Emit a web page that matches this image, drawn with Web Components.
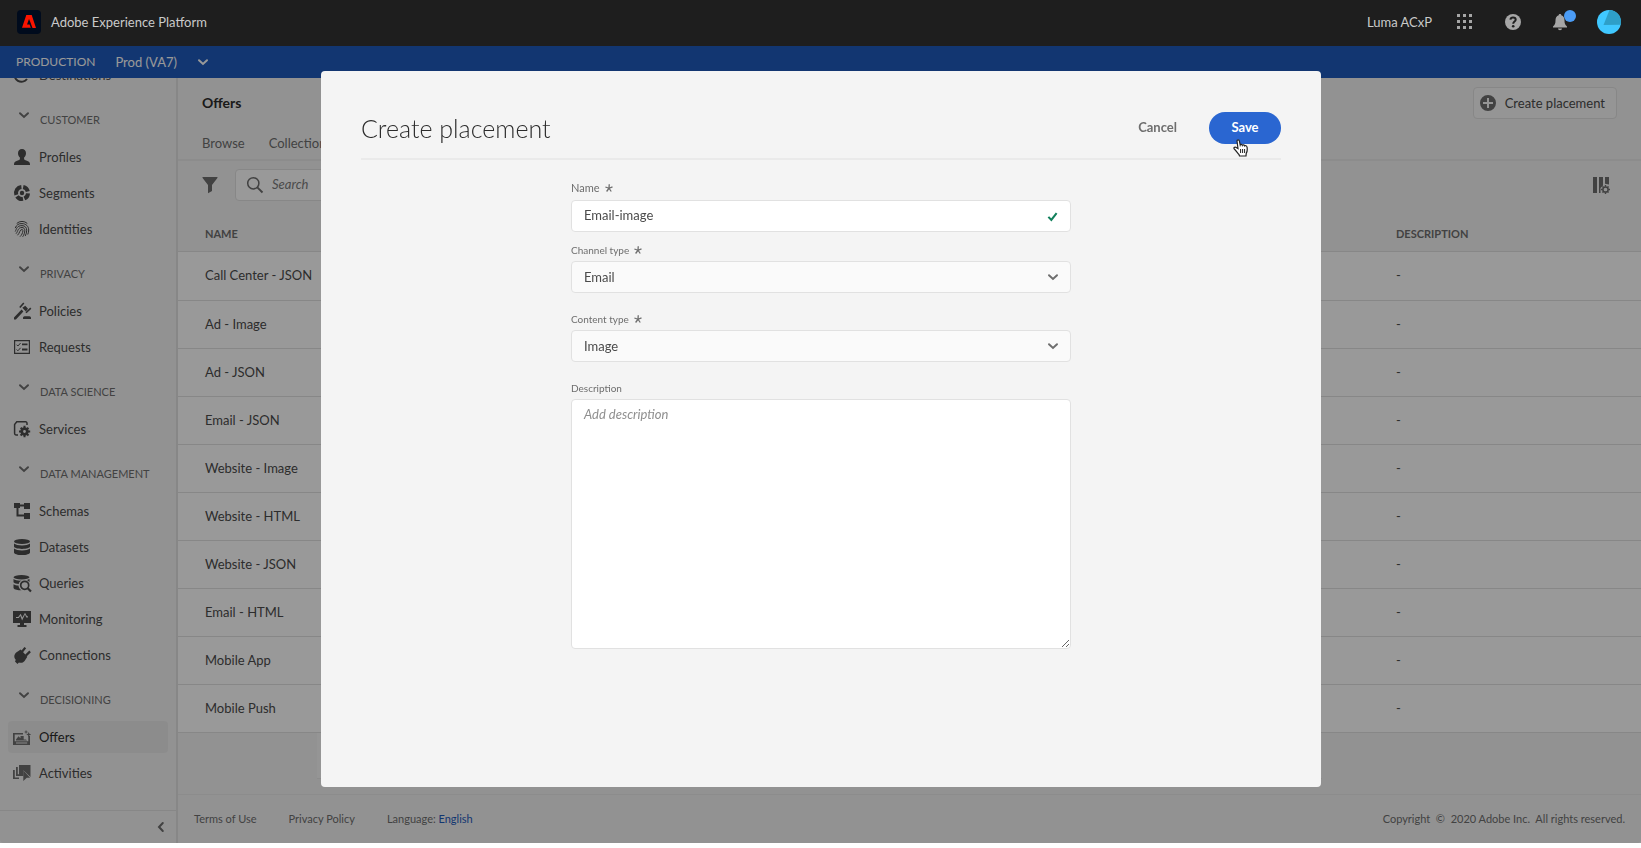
<!DOCTYPE html>
<html lang="en">
<head>
<meta charset="utf-8">
<meta name="viewport" content="width=device-width, initial-scale=1">
<title>Offers - Adobe Experience Platform</title>
<style>
  body { margin: 0; background: #fff; color: #4b4b4b; font: 13px/20px Lato, "Noto Sans", sans-serif; }
</style>
</head>
<body>
<aep-app>
  <aep-header slot="header" heading="Adobe Experience Platform" org="Luma ACxP"></aep-header>
  <aep-sandbox slot="sandbox" kind="PRODUCTION" name="Prod (VA7)"></aep-sandbox>
  <aep-nav slot="nav">
    <aep-nav-item icon="destinations">Destinations</aep-nav-item>
    <aep-nav-section heading="CUSTOMER">
      <aep-nav-item icon="profiles">Profiles</aep-nav-item>
      <aep-nav-item icon="segments">Segments</aep-nav-item>
      <aep-nav-item icon="identities">Identities</aep-nav-item>
    </aep-nav-section>
    <aep-nav-section heading="PRIVACY">
      <aep-nav-item icon="policies">Policies</aep-nav-item>
      <aep-nav-item icon="requests">Requests</aep-nav-item>
    </aep-nav-section>
    <aep-nav-section heading="DATA SCIENCE">
      <aep-nav-item icon="services">Services</aep-nav-item>
    </aep-nav-section>
    <aep-nav-section heading="DATA MANAGEMENT">
      <aep-nav-item icon="schemas">Schemas</aep-nav-item>
      <aep-nav-item icon="datasets">Datasets</aep-nav-item>
      <aep-nav-item icon="queries">Queries</aep-nav-item>
      <aep-nav-item icon="monitoring">Monitoring</aep-nav-item>
      <aep-nav-item icon="connections">Connections</aep-nav-item>
    </aep-nav-section>
    <aep-nav-section heading="DECISIONING">
      <aep-nav-item icon="offers" current>Offers</aep-nav-item>
      <aep-nav-item icon="activities">Activities</aep-nav-item>
    </aep-nav-section>
  </aep-nav>
  <aep-offers slot="main"></aep-offers>
  <aep-footer slot="footer"></aep-footer>
  <aep-dialog slot="dialog" heading="Create placement">
    <aep-field label="Name" kind="text" value="Email-image" required></aep-field>
    <aep-field label="Channel type" kind="select" value="Email" required></aep-field>
    <aep-field label="Content type" kind="select" value="Image" required></aep-field>
    <aep-field label="Description" kind="area" placeholder="Add description"></aep-field>
  </aep-dialog>
</aep-app>

<script>
const ICONS = {
  destinations: '<path d="M1 5a7 7 0 0 0 12 7" fill="none" stroke="currentColor" stroke-width="2"/><path d="M5 6h8v2H5z"/>',
  profiles: '<path d="M8 0c2.500 0 4 1.800 4 4.200 0 1.700-.8 3.300-1.900 4.200v1.700c0 .5.3.8.8 1 2.800.8 5.100 1.800 5.100 3.900v1H0v-1c0-2.100 2.300-3.100 5.100-3.900.5-.2.8-.5.8-1V8.400C4.800 7.500 4 5.900 4 4.200 4 1.800 5.500 0 8 0z"/>',
  segments: '<g fill="none" stroke="currentColor" stroke-width="4"><path d="M9.200 2a6 6 0 0 1 4.600 4.400"/><path d="M14 8.400a6 6 0 0 1-3.600 5.100"/><path d="M9 13.900A6 6 0 0 1 3 11.300"/><path d="M2.300 9.800A6 6 0 0 1 7.400 2"/></g><circle cx="8" cy="8" r="2.200"/>',
  identities: '<g fill="none" stroke="currentColor" stroke-width="1" stroke-linecap="round"><path d="M3 2.200a7.400 7.400 0 0 1 10 0"/><path d="M1.300 6.800A6.600 6.600 0 0 1 8 2.600c4 0 6.700 2.800 6.700 6.400 0 1.600-.3 3-.8 4.200"/><path d="M1.400 10.200C2.600 8 2.600 4.700 8 4.600c3 0 4.700 2 4.700 4.600 0 2-.5 4-1.300 5.500"/><path d="M2.300 12.400C4.300 10 3.600 6.600 8 6.500c1.700 0 2.800 1.200 2.800 2.800 0 2.400-.8 4.600-1.900 6.200"/><path d="M3.800 14C6 11.800 5.700 8.500 8 8.500c.8 0 1 .7.900 1.500-.3 2.200-1.300 4.200-2.600 5.400"/></g>',
  policies: '<path d="M0 14.600l7.600-8 1.800 1.800-7.500 8H0zM9 15c0-1 .7-1.700 1.600-1.700h4.800c.9 0 1.600.7 1.600 1.700v1H9z"/><path d="M8.300 4.800l3-2 2.700 3-2.100 2.700z"/><path d="M5.800 4.500l4-4.500M12 9.800l4.800-4.700" fill="none" stroke="currentColor" stroke-width="1.600"/>',
  requests: '<path d="M.600 1.600h14.800v12.800H.6z" fill="none" stroke="currentColor" stroke-width="1.200"/><path d="M2.600 5.700l1.300 1.300L6.600 4M2.600 10.500l1.300 1.300 2.700-3" fill="none" stroke="currentColor"/><path d="M8 4.600h5.500v1.600H8zM8 9.600h5.500v1.800H8z"/>',
  services: '<path d="M4 14H2a1.400 1.400 0 0 1-1.400-1.400V3.400L2.800.8h8.900A1.300 1.300 0 0 1 13 2.100V4" fill="none" stroke="currentColor" stroke-width="1.500"/><circle cx="10.500" cy="10.500" r="2.800" fill="none" stroke="currentColor" stroke-width="2.800"/><g stroke="currentColor" stroke-width="2"><path d="M10.500 7V4.800M10.500 16.200V14M5 10.500h2M14 10.500h2.200M6.700 6.700l1.500 1.500M12.900 12.900l1.600 1.600M14.400 6.700l-1.500 1.500M8.200 12.900l-1.600 1.600"/></g>',
  schemas: '<path d="M0 0h6v5H0zM10 0h6v6h-6zM10 10h6v6h-6z"/><path d="M4 2.600h8M3.500 4v8.600H11" fill="none" stroke="currentColor" stroke-width="2"/>',
  datasets: '<ellipse cx="8" cy="2.500" rx="8" ry="2.500"/><path d="M0 4.400c1.500 1.300 4.500 2 8 2s6.500-.7 8-2v3.100c0 1.400-3.600 2.400-8 2.400S0 8.900 0 7.500z"/><path d="M0 9.500c1.500 1.300 4.500 2 8 2s6.500-.7 8-2v3.900c0 1.400-3.600 2.600-8 2.600s-8-1.200-8-2.600z"/>',
  queries: '<ellipse cx="7.500" cy="2.200" rx="8" ry="2.200"/><path d="M-.500 4c2 1.400 5 1.800 8 1.600-1.600.7-2.500 2-2.800 3.300C2.500 8.800.500 8.300-.500 7.300zM-.500 9.200c1.300.8 3 1.200 5 1.300.1 1.900 1.300 3.900 3 4.700-4 .3-8-.8-8-2.400zM13 5l2.500-1v3z"/><circle cx="10.700" cy="10.300" r="4" fill="none" stroke="currentColor" stroke-width="1.700"/><path d="M13.500 13l3.500 3.500" stroke="currentColor" stroke-width="2.200"/>',
  monitoring: '<path d="M-1 0h18v12h-7v2h2.500v2h-9v-2H6v-2h-7zM2 7h2.800l1.500-2.300 1.800 4.700L11 3.500l1.300 3H14V5.300h-1L11 1.700 8.300 6.500 6.700 2.800 4.200 6H2z" fill-rule="evenodd"/>',
  connections: '<path d="M2.200 5.500l4.500-3 6.600 7.200-2.700 4.300c-1.700 2-4 2.200-5.700 1.400L3.500 17 1 14.400l.8-1.600C-.400 10.500 0 7.500 2.200 5.500z"/><path d="M8 4.700L11.300.6M11.800 8.600l4.300-4.200" stroke="currentColor" stroke-width="2.200"/>',
  offers: '<path d="M-1 4h10v1.500H.700v6.800h13.600V7H16v9H-1zM2 13.500v.9h11.200v-.9z" fill-rule="evenodd"/><path d="M2 10.500l2.500-3.300 2 2.100V7h3.200v3.500H12l1 1H2z"/><path d="M10 3l1.500-.6L12 .800l.6 1.600 1.600.6-1.600.6-.6 1.600-.5-1.600zM12.200 5.500l1.800-.7.700-1.900.7 1.900 1.800.7-1.800.7-.7 1.900-.7-1.900z"/>',
  activities: '<path d="M-1 5h1.800v7.500H5V14h-6zM2 2h1.800v7.300H7v1.600H2zM5 0h11.500v12L9.400 5.200v5.900H5z"/><path d="M9.300 5.200l6.800 7.600h-3.300L9.300 16z"/>',
  chevron: '<path d="M4 6.300L8 10l4-3.700" fill="none" stroke="currentColor" stroke-width="2" stroke-linecap="round"/>',
  back: '<path d="M9.800 4L6 8l3.800 4" fill="none" stroke="currentColor" stroke-width="2" stroke-linecap="round"/>',
  apps: '<path d="M0 0h3v3H0zM6 0h3v3H6zM12 0h3v3h-3zM0 6h3v3H0zM6 6h3v3H6zM12 6h3v3h-3zM0 12h3v3H0zM6 12h3v3H6zM12 12h3v3h-3z"/>',
  help: '<circle cx="8" cy="8" r="8"/><path d="M5.400 5.700C5.600 4.200 6.700 3.500 8 3.500c1.600 0 2.700.9 2.700 2.200 0 1.900-2.500 1.900-2.500 4" fill="none" stroke="#1e1e1e" stroke-width="2"/><circle cx="8.200" cy="12.200" r="1.300" fill="#1e1e1e"/>',
  bell: '<path d="M7 0c.8 0 1.300.5 1.300 1.200C10.700 1.800 11.500 4 11.500 6.300c0 3.400.6 4.500 2.500 6.200v.9H0v-.9c1.900-1.700 2.500-2.800 2.500-6.200C2.500 4 3.300 1.800 5.700 1.200 5.700.5 6.200 0 7 0zM5 14.600h4c0 1-.9 1.700-2 1.700s-2-.7-2-1.700z"/>',
  plus: '<path fill-rule="evenodd" d="M8 0a8 8 0 1 0 0 16A8 8 0 0 0 8 0zM7 3h2v4h4v2H9v4H7V9H3V7h4z"/>',
  filter: '<path d="M1 0h14c.5 0 .7.500.4.900L10 8v6l-4 2.300V8L.600.900C.300.500.500 0 1 0z"/>',
  search: '<circle cx="6.300" cy="6.300" r="5.600" fill="none" stroke="currentColor" stroke-width="1.500"/><path d="M10.300 10.300l5.200 5.200" stroke="currentColor" stroke-width="1.900"/>',
  columns: '<path d="M0 0h4v16H0zM6 0h4v8.500L7.500 11v5H6zM12 0h4v7.500l-4-.8z"/><circle cx="12.500" cy="12.500" r="2.600" fill="none" stroke="currentColor" stroke-width="1.500"/><path d="M12.500 9.800V8M12.500 17v-1.800M8 12.500h1.800M15.200 12.500H17M9.400 9.400l1.200 1.200M14.400 14.400l1.200 1.200M15.600 9.400l-1.200 1.200M10.600 14.400l-1.200 1.200" stroke="currentColor" stroke-width="1.400"/>',
  star: '<path d="M8.500 0.500L8 8.500l7-2.800M8 8.500l4.500 6.500M8 8.500L3.200 15M8 8.500L.800 6" fill="none" stroke="currentColor" stroke-width="2.600"/>',
  check: '<path d="M2 8.500L6.300 13 14 3" fill="none" stroke="currentColor" stroke-width="3"/>'
};

/* Base class: stamps the template returned by render() into an open shadow root. */
class AepElement extends HTMLElement {
  connectedCallback() {
    if (this.shadowRoot) return;
    const t = document.createElement('template');
    t.innerHTML = '<style>:host{display:block;box-sizing:border-box}*{box-sizing:border-box}h1,h2,p,ul{margin:0;padding:0}button,input,select,textarea{font:inherit;color:inherit;margin:0}a{color:inherit;text-decoration:none}</style>' + this.render();
    this.attachShadow({ mode: 'open' }).append(t.content);
  }
  attr(n) { return this.getAttribute(n) || ''; }
}

customElements.define('aep-icon', class extends AepElement {
  render() {
    return `<style>:host{width:16px;height:16px;flex:none}svg{display:block;width:100%;height:100%;overflow:visible}</style>
      <svg viewBox="0 0 16 16" fill="currentColor" aria-hidden="true">${ICONS[this.attr('name')]}</svg>`;
  }
});

customElements.define('aep-app', class extends AepElement {
  render() {
    return `<style>
      :host{height:calc(100vh - 5px);min-height:640px;display:grid;grid-template:auto auto minmax(0,1fr) auto / 178px minmax(0,1fr);background:#f4f4f4;overflow:hidden;border-radius:0 0 4px 4px}
      slot[name=header],slot[name=sandbox]{display:block;grid-column:1/-1}
      slot[name=nav]{display:block;grid-row:3/5;grid-column:1;min-height:0}
      slot[name=main]{display:block;min-height:0}
      slot[name=footer]{display:block;grid-column:2}
    </style>
    <slot name="header"></slot><slot name="sandbox"></slot><slot name="nav"></slot><slot name="main"></slot><slot name="footer"></slot><slot name="dialog"></slot>`;
  }
});

customElements.define('aep-header', class extends AepElement {
  render() {
    return `<style>
      header{display:flex;align-items:center;height:46px;padding:0 20px 2px 17px;background:#1e1e1e;color:#cacaca}
      .logo{width:24px;height:24px;margin-right:10px}
      .org{margin:0 25px 0 auto}
      button{display:grid;place-items:center;width:16px;height:24px;padding:0;border:0;background:none;color:#a6a6a6;margin-right:32px;position:relative}
      .bell{margin-right:28px}
      .badge{position:absolute;right:-7px;top:0;width:12px;height:12px;border-radius:50%;background:#4b9cf5}
      .me{width:24px;margin:0}
    </style>
    <header>
      <svg class="logo" viewBox="0 0 24 24" aria-hidden="true"><rect width="24" height="24" rx="4" fill="#000b1d"/><path d="M9.300 5h5.400L19 18h-3.500l-2.300-6.300L12 9l-2 5.500h2.600l1.200 3.300H5z" fill="#fa1400"/></svg>
      <span>${this.attr('heading')}</span>
      <span class="org">${this.attr('org')}</span>
      <button aria-label="Apps"><aep-icon name="apps"></aep-icon></button>
      <button aria-label="Help"><aep-icon name="help"></aep-icon></button>
      <button class="bell" aria-label="Notifications"><aep-icon name="bell"></aep-icon><span class="badge"></span></button>
      <button class="me" aria-label="Account"><svg width="24" height="24" viewBox="0 0 24 24"><circle cx="12" cy="12" r="12" fill="#40c8ff"/><path d="M12.500 0A12 12 0 0 1 23.800 14.700L6.500 15z" fill="#2e9fc8"/></svg></button>
    </header>`;
  }
});

customElements.define('aep-sandbox', class extends AepElement {
  render() {
    return `<style>
      :host{display:flex;align-items:center;height:32px;padding:0 16px;background:#1f5bbc;color:#fff}
      .kind{margin-right:20px;font-size:12px}
      button{display:flex;align-items:center;gap:18px;border:0;background:none;padding:0}
    </style>
    <span class="kind">${this.attr('kind')}</span>
    <button>${this.attr('name')}<aep-icon name="chevron"></aep-icon></button>`;
  }
});

customElements.define('aep-nav', class extends AepElement {
  render() {
    return `<style>
      :host{display:flex;flex-direction:column;height:100%;border-right:2px solid #e1e1e1}
      nav{flex:1;min-height:0;overflow:hidden;display:flex;flex-direction:column;justify-content:flex-end;padding-bottom:19px}
      .foot{flex:none;display:flex;justify-content:flex-end;align-items:center;height:33px;padding-right:7px;border-top:1px solid #e1e1e1}
      button{display:block;padding:0;border:0;background:none;color:#6e6e6e}
    </style>
    <nav aria-label="Main"><slot></slot></nav>
    <div class="foot"><button aria-label="Collapse"><aep-icon name="back"></aep-icon></button></div>`;
  }
});

customElements.define('aep-nav-section', class extends AepElement {
  render() {
    return `<style>
      :host{flex:none}
      h2{display:flex;align-items:flex-start;gap:8px;height:46px;padding:17px 0 0 16px;font-size:11px;line-height:20px;font-weight:400;color:#6e6e6e}
      aep-icon{margin-top:-3px}
    </style>
    <h2><aep-icon name="chevron"></aep-icon><span>${this.attr('heading')}</span></h2><slot></slot>`;
  }
});

customElements.define('aep-nav-item', class extends AepElement {
  render() {
    return `<style>
      :host{flex:none;padding:2px 8px}
      a{display:flex;align-items:center;gap:9px;height:32px;padding-left:6px;border-radius:4px}
      :host([current]) a{background:#eaeaea;color:#2c2c2c}
      :host([current]) aep-icon,:host([icon=activities]) aep-icon{color:#6e6e6e}
    </style>
    <a href="#"><aep-icon name="${this.attr('icon')}"></aep-icon><slot></slot></a>`;
  }
});

customElements.define('aep-offers', class extends AepElement {
  render() {
    const rows = ['Call Center - JSON', 'Ad - Image', 'Ad - JSON', 'Email - JSON', 'Website - Image', 'Website - HTML', 'Website - JSON', 'Email - HTML', 'Mobile App', 'Mobile Push'];
    return `<style>
      :host{overflow:hidden;height:100%}
      .top{display:flex;justify-content:space-between;align-items:center;padding:9px 24px 0}
      h1{font-size:14px;line-height:20px;font-weight:700;color:#2c2c2c}
      .create{display:flex;align-items:center;gap:9px;height:32px;padding:0 11px 0 6px;border:1px solid #e1e1e1;border-radius:4px;background:#f8f8f8}
      .create aep-icon{color:#6e6e6e}
      .tabs{display:flex;gap:24px;padding:14px 24px 6px;border-bottom:2px solid #eaeaea;color:#6e6e6e}
      .tools{display:flex;align-items:center;padding:8px 32px 0 24px;color:#6e6e6e}
      .tools>button{padding:0;border:0;background:none}
      .search{display:flex;align-items:center;gap:9px;width:240px;height:32px;margin:0 auto 0 17px;padding:0 11px;border:1px solid #e1e1e1;border-radius:4px;background:#fff}
      .search input{width:100%;border:0;padding:0 0 2px;background:none;outline:0}
      .search input::placeholder{color:#7c7c7c;font-style:italic;opacity:1}
      table{width:100%;border-collapse:collapse;table-layout:fixed}
      th{height:50px;padding:16px 27px 0;text-align:left;font-size:11px;line-height:16px;font-weight:700;color:#6e6e6e}
      td{height:48px;padding:0 27px;background:#fff;border-top:1px solid #e1e1e1;border-bottom:1px solid #e1e1e1}
      tbody tr:first-child td{height:49px;padding-bottom:2px}
      .last{width:272px}
      .bar{height:46px;margin:0 0 0 139px;max-width:1005px;background:#f8f8f8;border-bottom:1px solid #eaeaea}
    </style>
    <div class="top"><h1>Offers</h1><button class="create"><aep-icon name="plus"></aep-icon>Create placement</button></div>
    <div class="tabs"><a href="#">Browse</a><a href="#">Collections</a></div>
    <div class="tools"><button aria-label="Filter"><aep-icon name="filter"></aep-icon></button>
      <label class="search"><aep-icon name="search"></aep-icon><input type="search" placeholder="Search" aria-label="Search"></label>
      <button aria-label="Columns"><aep-icon name="columns"></aep-icon></button></div>
    <table><thead><tr><th>NAME</th><th class="last">DESCRIPTION</th></tr></thead>
    <tbody>${rows.map(r => `<tr><td>${r}</td><td>-</td></tr>`).join('')}</tbody></table>
    <div class="bar"></div>`;
  }
});

customElements.define('aep-footer', class extends AepElement {
  render() {
    return `<style>
      footer{display:flex;align-items:center;gap:32px;height:49px;padding:0 16px;border-top:1px solid #eaeaea;font-size:11px;line-height:16px;color:#6e6e6e}
      .lang{color:#1f5bbc}
      .copy{margin-left:auto;white-space:pre}
    </style>
    <footer><a href="#">Terms of Use</a><a href="#">Privacy Policy</a><span>Language: <a class="lang" href="#">English</a></span><span class="copy">Copyright  ©  2020 Adobe Inc.  All rights reserved.</span></footer>`;
  }
});

customElements.define('aep-dialog', class extends AepElement {
  render() {
    return `<style>
      :host{position:fixed;inset:46px 0 5px;padding:25px 0 0 1px;background:rgba(0,0,0,.4);display:flex;justify-content:center;align-items:flex-start}
      section{width:1000px;max-width:90%;height:calc(100vh - 132px);overflow:auto;padding:40px;border-radius:4px;background:#f4f4f4}
      header{display:flex;align-items:center;height:49px;padding-bottom:14px;border-bottom:2px solid #eaeaea}
      h1{flex:1;font-size:25px;line-height:32px;font-weight:300;color:#2c2c2c}
      button{height:32px;padding:0 16px 2px;border:0;border-radius:16px;background:none;font-weight:700}
      .cancel{margin-right:16px;color:#6e6e6e}
      .save{width:72px;background:#2a66d1;color:#fff;position:relative}
      .hand{position:absolute;left:24px;top:27px;width:16px;height:18px}
      form{display:flex;flex-direction:column;width:500px;max-width:100%;margin:20px auto 0}
    </style>
    <section role="dialog" aria-label="${this.attr('heading')}">
      <header><h1>${this.attr('heading')}</h1><button class="cancel">Cancel</button>
        <button class="save">Save<svg class="hand" viewBox="0 0 16 18" aria-hidden="true"><path d="M4 2c0-1.600 2.200-1.600 2.400 0l.8 4c.3-.8 2-.8 2.200.3.500-.8 2-.6 2.200.6.8-.7 2.200-.2 2.400 1 .5 2.600.4 4.600-.8 6.600L13 17H6.500L6 15.500C4.300 13.700 3 11.500 1.300 10c-.9-1 .2-2.400 1.500-1.800L5 9.500z" fill="#fff" stroke="#222" stroke-width="1.200"/><path d="M7.600 10v4M9.600 10v4M11.600 10v4" stroke="#222"/></svg></button>
      </header>
      <form><slot></slot></form>
    </section>`;
  }
});

customElements.define('aep-field', class extends AepElement {
  control() {
    const v = this.attr('value');
    switch (this.attr('kind')) {
      case 'select': return `<select id="c"><option>${v}</option></select><aep-icon name="chevron"></aep-icon>`;
      case 'area': return `<textarea id="c" placeholder="${this.attr('placeholder')}"></textarea>`;
      default: return `<input id="c" type="text" value="${v}"><aep-icon class="ok" name="check"></aep-icon>`;
    }
  }
  render() {
    return `<style>
      :host{padding-bottom:18px}
      :host([kind=text]){padding-bottom:10px}
      label{display:flex;align-items:center;gap:5px;height:19px;padding-bottom:3px;font-size:10px;line-height:16px;color:#6e6e6e}
      :host([kind=text]) label{height:20px;padding-bottom:4px;font-size:11px}
      label aep-icon{width:8px;height:8px}
      .box{display:grid;align-items:center}
      .box>*{grid-area:1/1}
      .box aep-icon{justify-self:end;margin-right:10px;pointer-events:none;color:#6e6e6e}
      .box .ok{width:11px;height:11px;margin-right:13px;color:#12805c}
      input,select,textarea{display:block;width:100%;height:32px;padding:0 12px;border:1px solid #e1e1e1;border-radius:4px;background:#fff;outline:0}
      input{padding-bottom:2px}
      select{appearance:none;background:#fafafa}
      textarea{height:250px;padding:4px 12px;resize:both}
      textarea::placeholder{color:#8e8e8e;font-style:italic;opacity:1}
    </style>
    <label for="c">${this.attr('label')}${this.hasAttribute('required') ? '<aep-icon name="star"></aep-icon>' : ''}</label>
    <div class="box">${this.control()}</div>`;
  }
});
</script>
</body>
</html>
